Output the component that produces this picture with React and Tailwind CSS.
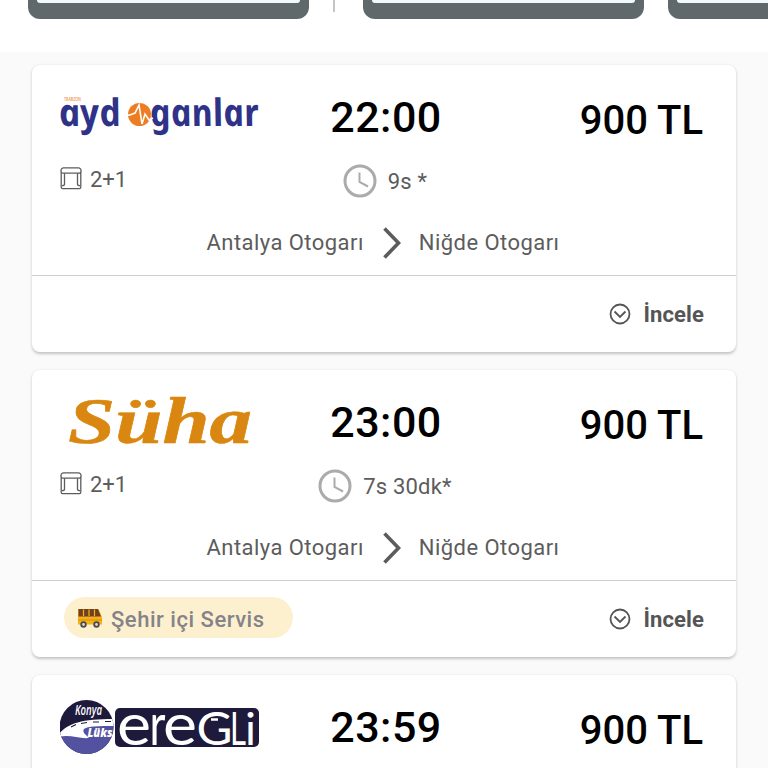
const trips = [
    { logo: "aydoganlar", time: "22:00", price: "900 TL", duration: "9s *", service: false },
    { logo: "suha", time: "23:00", price: "900 TL", duration: "7s 30dk*", service: true },
    { logo: "eregli", time: "23:59", price: "900 TL" },
]

function AydoganlarLogo(){
    return(
        <svg viewBox="0 0 200 56" className="block h-14 w-[200px] overflow-visible font-['Noto_Sans',sans-serif]">
            <text x="4" y="11" fontSize="6" fontWeight="600" fill="#ef9a5a" textLength="17" lengthAdjust="spacingAndGlyphs">TRABZON</text>
            <g fill="#2f3388" fontSize="38" fontWeight="700" fontStyle="italic">
                <text transform="translate(1 35.5) skewX(12)" textLength="62" lengthAdjust="spacingAndGlyphs">ayd</text>
                <text transform="translate(92 35.5) skewX(12)" textLength="109" lengthAdjust="spacingAndGlyphs">ganlar</text>
            </g>
            <circle cx="79.500" cy="24.500" r="11.500" fill="#ee7d22" />
            <path d="M66 25h4l5-2 4-8 3 19 3-10 4 6 4-2" fill="none" stroke="#fff" strokeWidth="1.600" />
        </svg>
    )
}

function SuhaLogo(){
    return(
        <svg viewBox="0 0 200 56" className="block h-14 w-[200px] overflow-visible font-['Liberation_Serif',serif]">
            <text x="8" y="48" fontSize="66" fontWeight="700" fontStyle="italic" fill="#d98710" stroke="#d98710" strokeWidth="0.600" textLength="184" lengthAdjust="spacingAndGlyphs">Süha</text>
        </svg>
    )
}

function EregliLogo(){
    return(
        <svg viewBox="0 0 200 56" className="block h-14 w-[200px] overflow-visible font-[Lato,sans-serif]">
            <clipPath id="badge"><circle cx="26.500" cy="27" r="27" /></clipPath>
            <g clipPath="url(#badge)">
                <rect width="54" height="54" fill="#1d1a3c" />
                <path d="M0 33C12 27 30 28 54 24v30H0z" fill="#5252a0" />
                <path d="M-1 34C8 23 22 19 54 19v7C40 26 28 26 24 29c-2 3 1 5 5 9-10 1-20-4-30-1z" fill="#fff" />
                <path d="M11 27l5-2.500M21 23.500l6-1M33 22h6M45 21.500h6" stroke="#1d1a3c" strokeWidth="1.200" />
            </g>
            <g fill="#fff" fontStyle="italic" className="font-['Open_Sans',sans-serif]">
                <text x="15" y="15" fontSize="13.500" fontWeight="600" textLength="27" lengthAdjust="spacingAndGlyphs">Konya</text>
                <text x="27.500" y="37" fontSize="12.500" fontWeight="800" textLength="25" lengthAdjust="spacingAndGlyphs">Lüks</text>
            </g>
            <rect x="55" y="8" width="144" height="39" rx="5" fill="#1d1a3c" />
            <g fill="#fff">
                <text x="57" y="44.500" fontSize="58" textLength="34" lengthAdjust="spacingAndGlyphs">e</text>
                <text x="89.500" y="44.500" fontSize="58" textLength="16" lengthAdjust="spacingAndGlyphs">r</text>
                <text x="103" y="44.500" fontSize="58" textLength="34" lengthAdjust="spacingAndGlyphs">e</text>
                <text x="136.500" y="44.500" fontSize="46" textLength="36" lengthAdjust="spacingAndGlyphs">G</text>
                <text x="170" y="44.500" fontSize="46" textLength="16" lengthAdjust="spacingAndGlyphs">L</text>
                <text x="185" y="44.500" fontSize="44" textLength="11" lengthAdjust="spacingAndGlyphs">i</text>
            </g>
            <path d="M151 19.500h7" stroke="#fff" strokeWidth="2.500" />
        </svg>
    )
}

function Logo({ name }){
    if(name === "aydoganlar") return <AydoganlarLogo />
    if(name === "suha") return <SuhaLogo />
    return <EregliLogo />
}

function SeatIcon(){
    return(
        <svg viewBox="0 0 22 24" preserveAspectRatio="none" className="-mt-[3px] h-[23px] w-[22px]" fill="none" stroke="#5c5c5c" strokeWidth="1.300">
            <path d="M3.500 1h15a2.500 2.500 0 0 1 2.500 2.500v1a2 2 0 0 1-2 2H3a2 2 0 0 1-2-2v-1A2.500 2.500 0 0 1 3.500 1z" />
            <path d="M1.200 5.500V21A1.500 1.500 0 0 0 2.700 22.500h16.600A1.500 1.500 0 0 0 20.800 21V5.500M4.500 6.500V18M17.500 6.500V18M2 19.500c1.500 0 2.500-.5 2.500-1.500M20 19.500c-1.500 0-2.500-.5-2.500-1.500" />
        </svg>
    )
}

function ClockIcon(){
    return(
        <svg viewBox="0 0 34 34" className="-mt-0.5 size-[34px]" fill="none" stroke="#ababab">
            <circle cx="17" cy="17" r="15" strokeWidth="3" />
            <path d="M16.500 8.500V18l8.500 4.500" strokeWidth="2" />
        </svg>
    )
}

function BusIcon(){
    return(
        <svg viewBox="0 0 26 20" className="h-5 w-[26px]">
            <path d="M1 1h20.500L25 9v7.500H1z" fill="#f5b21b" />
            <path d="M1.500 1H21l3 7.500H1.500z" fill="#70401f" />
            <path d="M6.500 1.500V8M12 1.500V8M17.500 1.500V8" stroke="#f5b21b" strokeWidth="1.200" />
            <path d="M1 12h24" stroke="#d8920f" />
            <g fill="#ddd" stroke="#4d4a45" strokeWidth="1.800">
                <circle cx="6.500" cy="16.500" r="2.300" />
                <circle cx="19.500" cy="16.500" r="2.300" />
            </g>
        </svg>
    )
}

function TripDetails({ trip }){
    return(
        <>
            <div className="mt-[15px] grid grid-cols-[200px_250px_1fr] pl-7 text-[22px] leading-[34px] text-[#5c5c5c]">
                <div className="flex h-[31px] items-center gap-2">
                    <SeatIcon />
                    <span className="pt-px">2+1</span>
                </div>
                <div className="flex items-center justify-center gap-[11px] pt-px tracking-[0.2px]">
                    <ClockIcon />
                    <span>{trip.duration}</span>
                </div>
            </div>
            <div className="mt-[27px] flex items-center justify-center gap-[18px] pr-[2px] text-[22px] leading-[34px] tracking-[0.45px] text-[#5c5c5c]">
                <span>Antalya Otogarı</span>
                <svg viewBox="0 0 18 32" className="ml-px h-8 w-[18px]" fill="none" stroke="#5c5c5c" strokeWidth="3.600">
                    <path d="M1.500 1.500L15.500 16 1.500 30.500" />
                </svg>
                <span>Niğde Otogarı</span>
            </div>
        </>
    )
}

function TripFooter({ trip }){
    return(
        <div className="flex h-[77px] items-center justify-between border-t border-[#cfcfcf] pr-8 pl-8">
            {trip.service ? (
                <div className="mb-[3px] flex h-[41px] w-[229px] items-center gap-2 rounded-full bg-[#fdf0cf] pl-[13px]">
                    <BusIcon />
                    <span className="pt-1 text-[22px] font-medium tracking-[0.52px] whitespace-nowrap text-[#85838a]">Şehir içi Servis</span>
                </div>
            ) : <div />}
            <button className="flex items-center gap-[13px] pt-px text-[22px] font-bold tracking-[0.1px] text-[#555]">
                <svg viewBox="0 0 22 22" className="-mt-px size-[22px]" fill="none" stroke="#555" strokeWidth="1.800">
                    <circle cx="11" cy="11" r="9.500" />
                    <path d="M5.500 8.500l5.500 5.500 5.500-5.500" />
                </svg>
                İncele
            </button>
        </div>
    )
}

function TripCard({ trip }){
    return(
        <section className="h-[287px] shrink-0 rounded-lg bg-white shadow-[0_1.5px_3px_rgba(0,0,0,0.22)]">
            <div className="flex h-[210px] flex-col pt-[25px]">
                <div className="grid grid-cols-[200px_252px_1fr] pr-[33px] pl-7">
                    <Logo name={trip.logo} />
                    <p className="-mt-px text-center text-[43px] leading-14 font-medium tracking-[0.500px] text-black">{trip.time}</p>
                    <p className="pt-[3px] text-right text-[40px] leading-14 font-medium text-black">{trip.price}</p>
                </div>
                {trip.duration && <TripDetails trip={trip} />}
            </div>
            {trip.duration && <TripFooter trip={trip} />}
        </section>
    )
}

export default function App(){
    return(
        <main className="h-[768px] w-[768px] overflow-hidden bg-[#fafafa] font-[Roboto,sans-serif]">
            <header className="flex h-[52px] items-start overflow-hidden bg-white pl-7">
                <div className="h-[19px] w-[281px] shrink-0 rounded-b-xl bg-[#5f686b] px-[9px]">
                    <div className="h-[3px] rounded-b-[3px] bg-[#f1f9fe]" />
                </div>
                <div className="ml-6 h-3 w-[2px] shrink-0 bg-[#c4c4c4]" />
                <div className="ml-7 h-[19px] w-[281px] shrink-0 rounded-b-xl bg-[#5f686b] px-[9px]">
                    <div className="h-[3px] rounded-b-[3px] bg-[#f1f9fe]" />
                </div>
                <div className="ml-6 h-[19px] w-[281px] shrink-0 rounded-b-xl bg-[#5f686b] px-[9px]">
                    <div className="h-[3px] rounded-b-[3px] bg-[#f1f9fe]" />
                </div>
            </header>
            <div className="flex flex-col gap-[18px] px-8 pt-[13px]">
                {trips.map((trip) => <TripCard key={trip.time} trip={trip} />)}
            </div>
        </main>
    )
}
